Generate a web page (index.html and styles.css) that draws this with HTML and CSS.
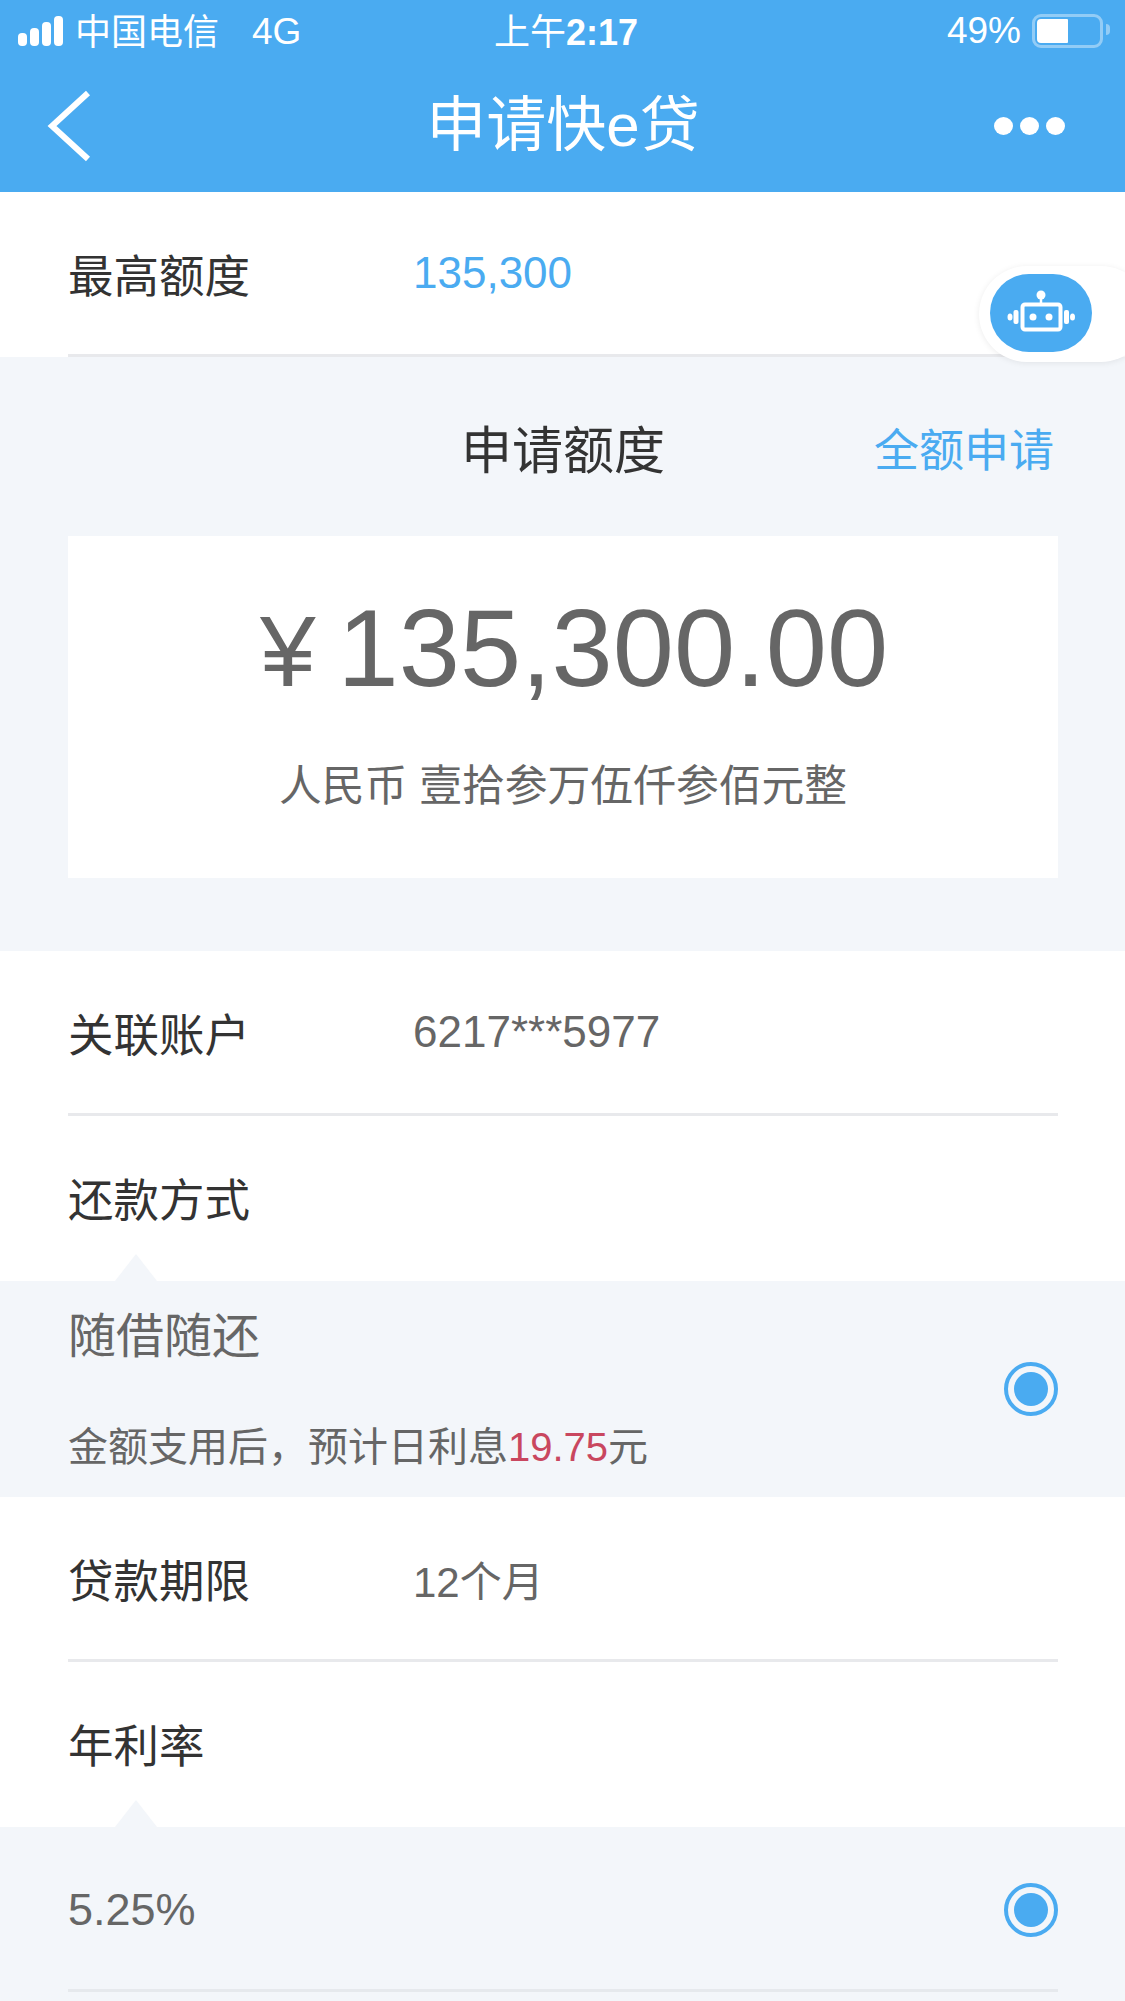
FILE: index.html
```html
<!DOCTYPE html>
<html lang="zh-CN">

<head>
    <meta charset="UTF-8">
    <meta name="viewport" content="width=device-width, initial-scale=1.0">
    <title>申请快e贷</title>
    <link rel="stylesheet" href="styles.css">
</head>

<body>
    <div class="page">
        <header class="top">
            <div class="status">
                <div class="status-left">
                    <div class="signal"><i></i><i></i><i></i><i></i></div>
                    <span class="carrier">中国电信</span>
                    <span class="network">4G</span>
                </div>
                <div class="clock">上午<b>2:17</b></div>
                <div class="status-right">
                    <span>49%</span>
                    <div class="battery"><i></i></div>
                </div>
            </div>
            <nav class="nav">
                <svg class="back" width="46" height="72" viewBox="0 0 46 72">
                    <path d="M42 3 L6 36 L42 69" fill="none" stroke="#fff" stroke-width="6"/>
                </svg>
                <div class="title">申请快e贷</div>
                <div class="more"><i></i><i></i><i></i></div>
            </nav>
        </header>

        <div class="robot">
            <div class="robot-pill">
                <svg width="102" height="78" viewBox="0 0 102 78">
                    <circle cx="51" cy="21" r="4.5" fill="#fff"/>
                    <path d="M51 24 V30" stroke="#fff" stroke-width="2.5"/>
                    <rect x="32.5" y="30.5" width="38" height="25" rx="2.5" fill="none" stroke="#fff" stroke-width="4"/>
                    <circle cx="43" cy="43" r="3.5" fill="#fff"/>
                    <circle cx="59" cy="43" r="3.5" fill="#fff"/>
                    <rect x="23.5" y="36" width="5" height="14" rx="2" fill="#fff"/>
                    <rect x="74" y="36" width="5" height="14" rx="2" fill="#fff"/>
                    <ellipse cx="20" cy="43" rx="2.5" ry="3.5" fill="#fff"/>
                    <ellipse cx="82.5" cy="43" rx="2.5" ry="3.5" fill="#fff"/>
                </svg>
            </div>
        </div>

        <section class="row">
            <div class="label">最高额度</div>
            <div class="value blue">135,300</div>
        </section>

        <section class="apply">
            <div class="apply-head">
                <div class="apply-title">申请额度</div>
                <div class="apply-all">全额申请</div>
            </div>
            <div class="amount-card">
                <div class="amount"><span class="yen">¥</span>135,300.00</div>
                <div class="amount-cn">人民币 壹拾参万伍仟参佰元整</div>
            </div>
        </section>

        <section class="row">
            <div class="label">关联账户</div>
            <div class="value">6217***5977</div>
        </section>

        <section class="row no-line">
            <div class="label">还款方式</div>
        </section>
        <section class="option option-repay">
            <div>
                <div class="option-name">随借随还</div>
                <div class="option-note">金额支用后，预计日利息<span class="red">19.75</span>元</div>
            </div>
            <div class="radio"></div>
        </section>

        <section class="row">
            <div class="label">贷款期限</div>
            <div class="value value-term">12个月</div>
        </section>

        <section class="row no-line">
            <div class="label">年利率</div>
        </section>
        <section class="option option-rate">
            <div class="rate-line">
                <div class="option-rate-text">5.25%</div>
                <div class="radio"></div>
            </div>
        </section>
    </div>
</body>

</html>
```

FILE: styles.css
```css
* {
    box-sizing: border-box;
}

body {
    margin: 0;
    padding: 0;
    background: #fff;
    font-family: "Liberation Sans", "Noto Sans CJK SC", sans-serif;
    color: #333;
}

.page {
    position: relative;
    width: 1125px;
    height: 2001px;
    overflow: hidden;
}

/* top bar */
.top {
    height: 192px;
    background-color: #4aabf1;
    color: #fff;
}

.status {
    position: relative;
    display: flex;
    justify-content: space-between;
    align-items: center;
    height: 62px;
    padding: 0 22px 0 18px;
    font-size: 36px;
}

.status-left,
.status-right {
    display: flex;
    align-items: center;
}

.signal {
    display: flex;
    align-items: flex-end;
    gap: 3px;
    height: 30px;
}

.signal i {
    display: block;
    width: 9px;
    background: #fff;
    border-radius: 4px;
}

.signal i:nth-child(1) { height: 13px; }
.signal i:nth-child(2) { height: 18px; }
.signal i:nth-child(3) { height: 24px; }
.signal i:nth-child(4) { height: 30px; }

.carrier {
    margin-left: 12px;
    margin-top: -5px;
}

.network {
    margin-left: 33px;
    margin-top: 2px;
    font-size: 37px;
}

.clock {
    position: absolute;
    left: 494px;
    margin-top: -5px;
    font-size: 36px;
}

.status-right span {
    font-size: 37px;
}

.battery {
    position: relative;
    width: 71px;
    height: 34px;
    margin-left: 11px;
    padding: 2px;
    border: 3px solid rgba(255, 255, 255, 0.4);
    border-radius: 9px;
}

.battery::after {
    content: "";
    position: absolute;
    top: 7px;
    right: -10px;
    width: 4px;
    height: 11px;
    background: rgba(255, 255, 255, 0.4);
    border-radius: 0 4px 4px 0;
}

.battery i {
    display: block;
    width: 31px;
    height: 100%;
    background: #fff;
    border-radius: 4px 1px 1px 4px;
}

.nav {
    display: grid;
    grid-template-columns: 1fr auto 1fr;
    align-items: center;
    height: 130px;
    padding: 0 60px 3px 46px;
}

.title {
    margin-left: 15px;
    font-size: 60px;
    line-height: 1;
}

.more {
    display: flex;
    justify-self: end;
    gap: 7px;
}

.more i {
    display: block;
    width: 19px;
    height: 18px;
    background: #fff;
    border-radius: 50%;
}

/* floating robot button */
.robot {
    position: absolute;
    top: 266px;
    left: 979px;
    width: 170px;
    height: 96px;
    padding: 8px 0 0 11px;
    background: #fff;
    border-radius: 48px;
    box-shadow: 0 1px 6px rgba(0, 0, 0, 0.08);
}

.robot-pill {
    width: 102px;
    height: 78px;
    background-color: #4aabf1;
    border-radius: 39px;
}

.robot-pill svg {
    display: block;
}

/* rows */
.row {
    display: flex;
    align-items: center;
    height: 165px;
    margin: 0 67px 0 68px;
    border-bottom: 3px solid #e8e9ec;
}

.row.no-line {
    padding-bottom: 3px;
    border-bottom: none;
}

.label {
    width: 345px;
    font-size: 45.5px;
    color: #333;
}

.value {
    font-size: 44px;
    color: #666;
}

.value-term {
    font-size: 42px;
}

.blue {
    color: #4aabf1;
}

/* apply amount */
.apply {
    height: 594px;
    padding: 0 67px 0 68px;
    background-color: #f3f6fa;
}

.apply-head {
    position: relative;
    display: flex;
    justify-content: center;
    align-items: center;
    height: 179px;
    padding-top: 1px;
}

.apply-title {
    font-size: 51px;
}

.apply-all {
    position: absolute;
    right: 4px;
    font-size: 45px;
    color: #4aabf1;
}

.amount-card {
    display: flex;
    flex-direction: column;
    align-items: center;
    height: 342px;
    padding-top: 49px;
    background: #fff;
    color: #666;
}

.amount {
    padding-left: 22px;
    font-size: 110px;
    line-height: 126px;
}

.yen {
    margin-right: 22px;
    font-size: 100px;
}

.amount-cn {
    margin-top: 42px;
    font-size: 42.8px;
    line-height: 60px;
}

/* options */
.option {
    position: relative;
    background-color: #f3f6fa;
}

.option::before {
    content: "";
    position: absolute;
    top: -27px;
    left: 115px;
    border-left: 21px solid transparent;
    border-right: 21px solid transparent;
    border-bottom: 27px solid #f3f6fa;
}

.option-repay {
    display: flex;
    justify-content: space-between;
    align-items: center;
    height: 216px;
    padding: 0 67px 0 68px;
    color: #666;
}

.option-name {
    margin-top: -2px;
    margin-bottom: 47px;
    font-size: 48px;
    line-height: 70px;
}

.option-note {
    font-size: 40px;
    line-height: 56px;
}

.red {
    color: #c9475f;
}

.option-rate {
    height: 174px;
    padding: 0 67px 0 68px;
    color: #666;
}

.rate-line {
    display: flex;
    justify-content: space-between;
    align-items: center;
    height: 165px;
    padding-top: 3px;
    border-bottom: 3px solid #e6e9ed;
}

.option-rate-text {
    font-size: 45px;
}

.radio {
    width: 54px;
    height: 54px;
    padding: 6px;
    border: 4px solid #4aabf1;
    border-radius: 50%;
}

.radio::before {
    content: "";
    display: block;
    width: 100%;
    height: 100%;
    background-color: #4aabf1;
    border-radius: 50%;
}
```
